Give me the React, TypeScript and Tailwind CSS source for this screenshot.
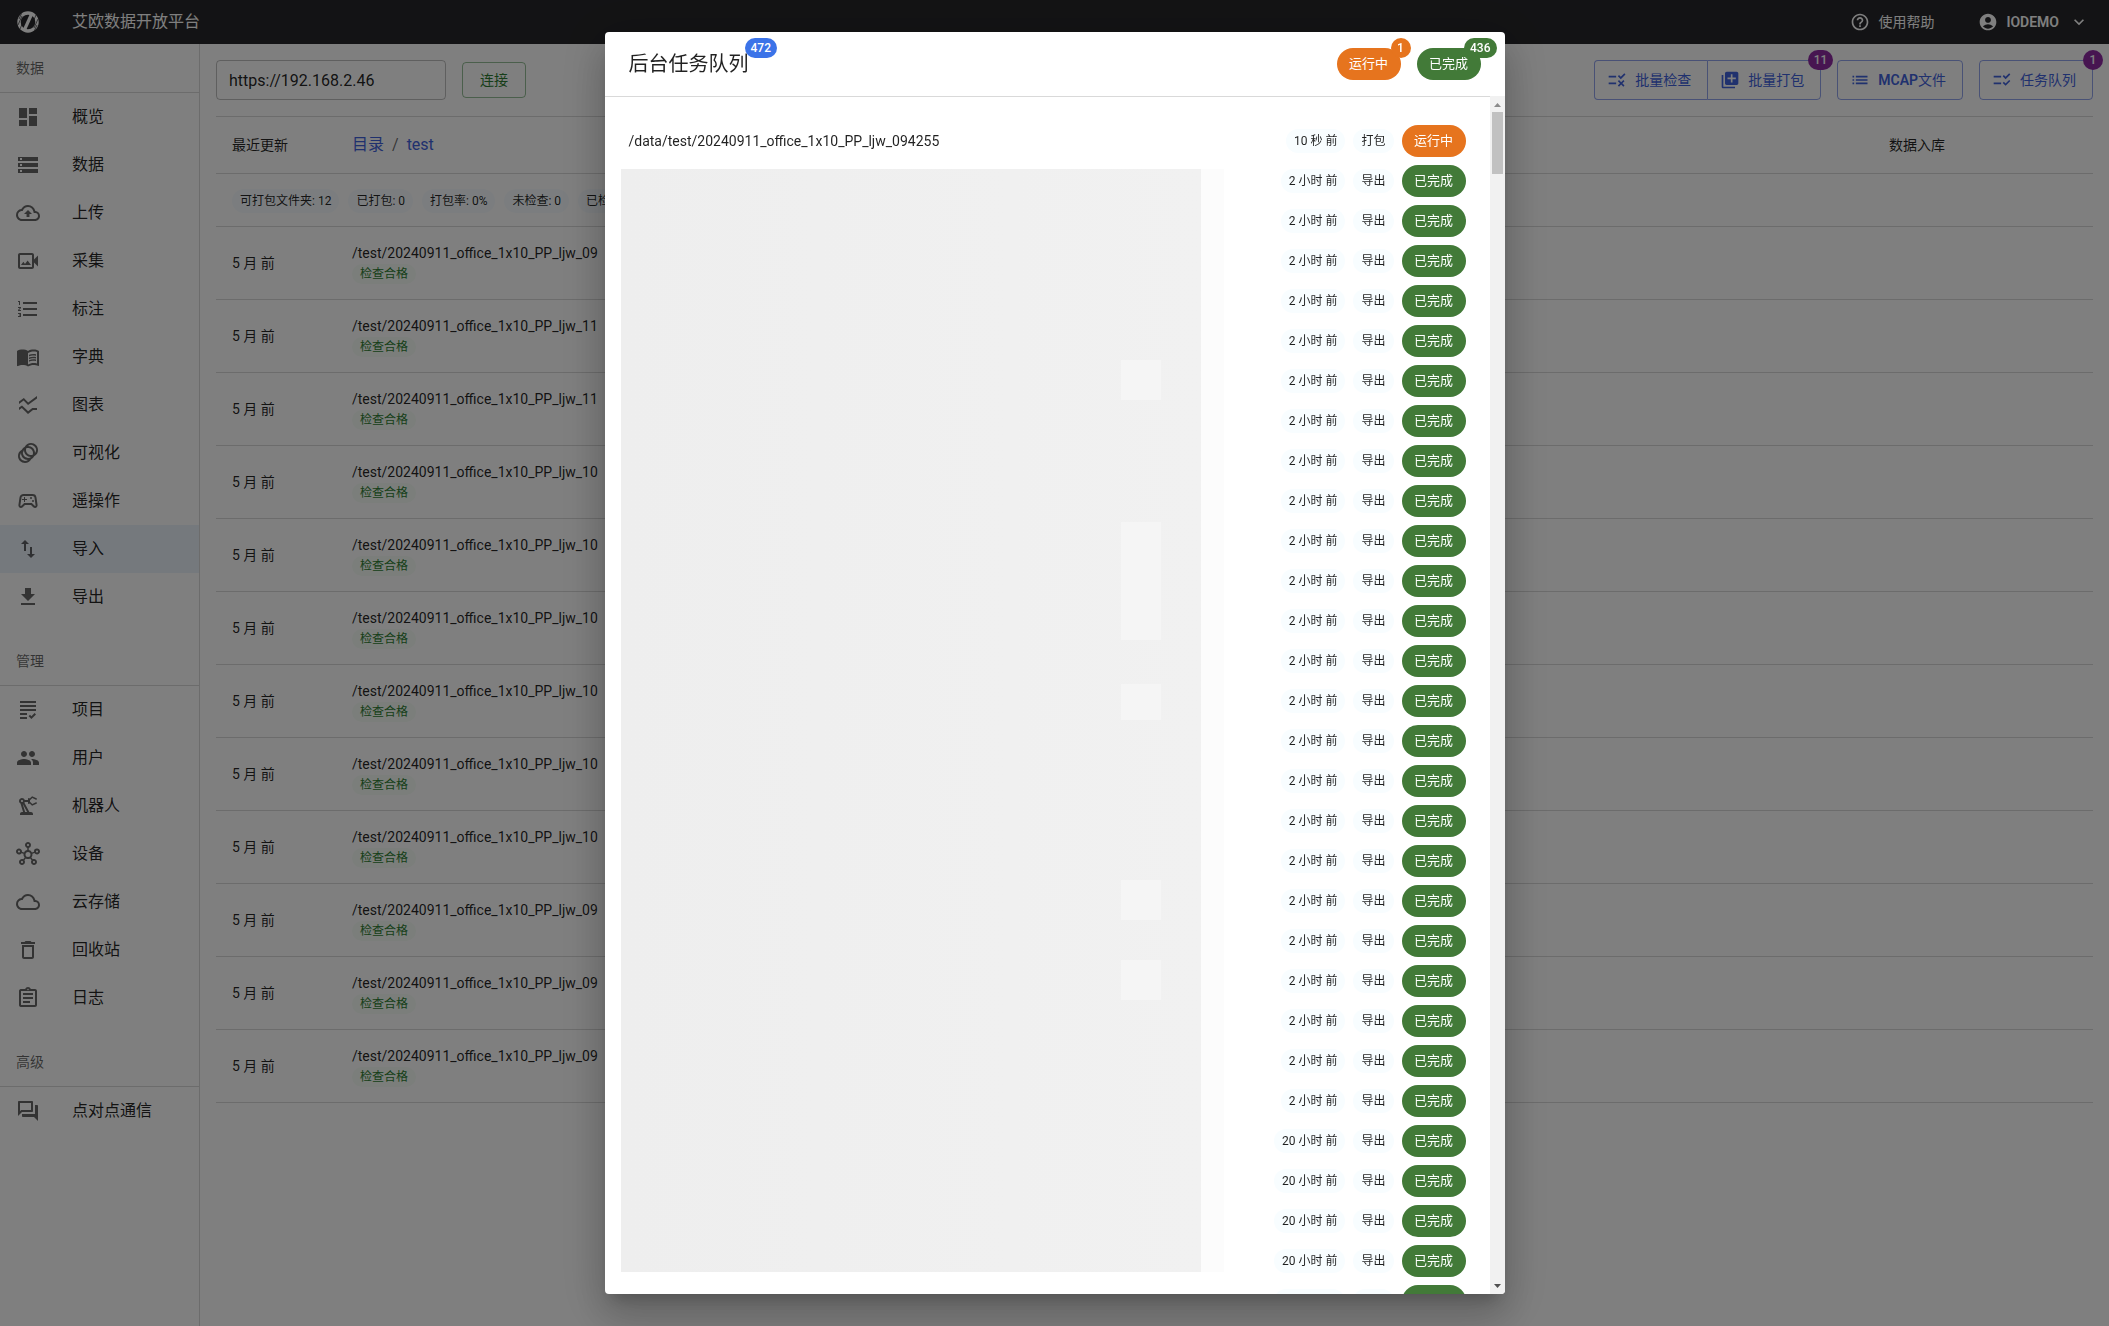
import clsx from "clsx";
import { IconType } from "react-icons";
import {
    MdAccountCircle,
    MdAnimation,
    MdChecklistRtl,
    MdDashboard,
    MdDeleteOutline,
    MdDownload,
    MdFormatListNumbered,
    MdGrading,
    MdHelpOutline,
    MdImportExport,
    MdKeyboardArrowDown,
    MdLibraryAdd,
    MdList,
    MdMenuBook,
    MdOutlineAssignment,
    MdOutlineCloud,
    MdOutlineCloudUpload,
    MdOutlineHub,
    MdOutlinePrecisionManufacturing,
    MdOutlineQuestionAnswer,
    MdOutlineSportsEsports,
    MdOutlineVideoCameraBack,
    MdPeople,
    MdRule,
    MdSsidChart,
    MdStorage,
} from "react-icons/md";

interface NavItem {
    label: string,
    icon: IconType,
    active?: boolean,
}

interface Task {
    time: string,
    type: string,
    running?: boolean,
    path?: string,
}

const sections: { title: string, items: NavItem[] }[] = [
    {
        title: "数据",
        items: [
            { label: "概览", icon: MdDashboard },
            { label: "数据", icon: MdStorage },
            { label: "上传", icon: MdOutlineCloudUpload },
            { label: "采集", icon: MdOutlineVideoCameraBack },
            { label: "标注", icon: MdFormatListNumbered },
            { label: "字典", icon: MdMenuBook },
            { label: "图表", icon: MdSsidChart },
            { label: "可视化", icon: MdAnimation },
            { label: "遥操作", icon: MdOutlineSportsEsports },
            { label: "导入", icon: MdImportExport, active: true },
            { label: "导出", icon: MdDownload },
        ],
    },
    {
        title: "管理",
        items: [
            { label: "项目", icon: MdGrading },
            { label: "用户", icon: MdPeople },
            { label: "机器人", icon: MdOutlinePrecisionManufacturing },
            { label: "设备", icon: MdOutlineHub },
            { label: "云存储", icon: MdOutlineCloud },
            { label: "回收站", icon: MdDeleteOutline },
            { label: "日志", icon: MdOutlineAssignment },
        ],
    },
    {
        title: "高级",
        items: [{ label: "点对点通信", icon: MdOutlineQuestionAnswer }],
    },
];

const stats = ["可打包文件夹: 12", "已打包: 0", "打包率: 0%", "未检查: 0", "已检查: 12"];

const folders = ["09", "11", "11", "10", "10", "10", "10", "10", "10", "09", "09", "09"];

const tasks: Task[] = [
    { time: "10 秒 前", type: "打包", running: true, path: "/data/test/20240911_office_1x10_PP_ljw_094255" },
    ...Array.from({ length: 24 }, () => ({ time: "2 小时 前", type: "导出" })),
    ...Array.from({ length: 5 }, () => ({ time: "20 小时 前", type: "导出" })),
];

const Logo = () => (
    <svg viewBox="0 0 24 24" className="size-6 shrink-0" fill="none" stroke="#fff">
        <circle cx="12" cy="12" r="9" strokeWidth="3.4" />
        <path d="M8.600 19.500 15.400 4.500" strokeWidth="3.200" />
        <path d="M3 9 5.500 3.500M2 15 6 6M4 19 7 12M17 12 20 5M18 18 22 9M18.500 20.500 21 15" stroke="#27272a" strokeWidth="0.700" />
    </svg>
);

const Header = () => (
    <header className="flex h-11 items-center bg-[#27272a] pr-5 pl-4 text-white">
        <Logo />
        <h1 className="ml-8 flex-1 text-base">艾欧数据开放平台</h1>
        <a href="#help" className="flex items-center gap-2 text-sm">
            <MdHelpOutline className="size-5" />
            使用帮助
        </a>
        <button type="button" className="ml-11 flex items-center gap-2 text-sm font-semibold">
            <MdAccountCircle className="size-5" />
            IODEMO
            <MdKeyboardArrowDown className="ml-0.5 size-5" />
        </button>
    </header>
);

const Sidebar = () => (
    <nav className="w-50 shrink-0 border-r border-black/15">
        {sections.map(section => (
            <section key={section.title} className="mb-4">
                <h2 className="h-12 px-4 text-sm leading-12 text-black/60">{section.title}</h2>
                <ul className="border-t border-black/15">
                    {section.items.map(({ label, icon: Icon, active }) => (
                        <li key={label}>
                            <a href="#" className={clsx("flex h-12 items-center gap-8 px-4", active && "bg-[#ebf3fb]")}>
                                <Icon className="size-6 text-black/60" />
                                {label}
                            </a>
                        </li>
                    ))}
                </ul>
            </section>
        ))}
    </nav>
);

const outlined = "flex h-10 items-center gap-2 border border-[#4a67e0]/60 pr-4 pl-3 text-sm text-[#4162dc]";

const Toolbar = () => (
    <div className="flex items-center gap-4 border-b border-black/15 py-4">
        <input
            type="text"
            aria-label="服务器地址"
            defaultValue="https://192.168.2.46"
            className="h-10 w-[230px] rounded border border-black/25 px-3 text-base"
            />
        <button type="button" className="h-9 w-16 rounded border border-[#2e7d32]/50 text-sm text-[#2e7d32]">
            连接
        </button>
        <div className="relative ml-auto flex">
            <button type="button" className={clsx(outlined, "rounded-l border-r-0")}>
                <MdRule className="size-5" />
                批量检查
            </button>
            <button type="button" className={clsx(outlined, "rounded-r")}>
                <MdLibraryAdd className="size-5" />
                批量打包
            </button>
            <CornerBadge text="11" className="-right-3 bg-[#8e2ba3]" />
        </div>
        <button type="button" className={clsx(outlined, "rounded")}>
            <MdList className="size-5" />
            <span><b className="font-semibold">MCAP</b>文件</span>
        </button>
        <div className="relative">
            <button type="button" className={clsx(outlined, "rounded")}>
                <MdChecklistRtl className="size-5" />
                任务队列
            </button>
            <CornerBadge text="1" className="-right-2.5 bg-[#8e2ba3]" />
        </div>
    </div>
);

const CornerBadge = ({ text, className }: { text: string, className: string }) => (
    <span className={clsx("absolute -top-2.5 flex h-5 min-w-5 items-center justify-center rounded-full px-1.5 text-xs font-medium text-white", className)}>
        {text}
    </span>
);

const FolderTable = () => (
    <table className="w-full table-fixed text-left text-sm">
        <colgroup>
            <col className="w-30" />
            <col />
            <col className="w-55" />
        </colgroup>
        <thead>
            <tr className="h-14 border-b border-black/15">
                <th className="px-4 font-normal">最近更新</th>
                <th className="px-4 font-normal">
                    <div className="flex gap-2 text-base text-black/60">
                        <a href="#root" className="text-[#4162dc]">目录</a>
                        /
                        <a href="#test" className="text-[#4162dc]">test</a>
                    </div>
                </th>
                <th className="px-4 font-normal">数据入库</th>
            </tr>
        </thead>
        <tbody>
            <tr className="h-[53px] border-b border-black/15">
                <td colSpan={3} className="px-4 pt-0.5">
                    <div className="flex gap-[9px]">
                        {stats.map(stat => (
                            <span key={stat} className="rounded-full bg-[#f6fbff] px-2 text-xs leading-6">{stat}</span>
                        ))}
                    </div>
                </td>
            </tr>
            {folders.map((suffix, i) => (
                <tr key={i} className="h-[73px] border-b border-black/15">
                    <td className="px-4">5 月 前</td>
                    <td className="px-4 pt-0.5">
                        <p className="leading-5">/test/20240911_office_1x10_PP_ljw_{suffix}</p>
                        <span className="inline-block rounded-full bg-[#f6fdf6] px-2 text-xs leading-5 text-[#2e7d32]">检查合格</span>
                    </td>
                    <td />
                </tr>
            ))}
        </tbody>
    </table>
);

const StatusChip = ({ running }: { running?: boolean }) => (
    <span className={clsx("flex h-8 w-16 items-center justify-center rounded-full text-[13px] text-white", running ? "bg-[#e6741e]" : "bg-[#427a38]")}>
        {running ? "运行中" : "已完成"}
    </span>
);

const Patch = ({ className }: { className: string }) => (
    <div className={clsx("absolute right-10 w-10 bg-[#f5f5f5]", className)} />
);

const Scrollbar = () => (
    <div aria-hidden="true" className="flex w-[15px] shrink-0 flex-col items-center bg-[#f1f1f1]">
        <svg viewBox="0 0 15 16" className="h-4 w-full" fill="#8b8b8b"><path d="M4 11 7.500 7 11 11z" /></svg>
        <div className="h-[62px] w-[11px] bg-[#c1c1c1]" />
        <svg viewBox="0 0 15 16" className="mt-auto h-4 w-full" fill="#505050"><path d="M4 6 7.500 10 11 6z" /></svg>
    </div>
);

const TaskDialog = () => (
    <div className="fixed inset-0 flex justify-center bg-black/50 py-8">
        <div
            role="dialog"
            aria-label="后台任务队列"
            className="flex w-full max-w-[900px] flex-col overflow-hidden rounded bg-white shadow-[0_11px_15px_-7px_rgba(0,0,0,0.2),0_24px_38px_3px_rgba(0,0,0,0.14),0_9px_46px_8px_rgba(0,0,0,0.12)]"
            >
            <div className="flex h-16 shrink-0 items-center gap-4 px-6">
                <div className="relative mr-auto">
                    <h2 className="text-xl leading-8">后台任务队列</h2>
                    <CornerBadge text="472" className="left-full -ml-1 bg-[#3b73e8]" />
                </div>
                <div className="relative">
                    <StatusChip running />
                    <CornerBadge text="1" className="-right-2.5 bg-[#e6741e]" />
                </div>
                <div className="relative">
                    <StatusChip />
                    <CornerBadge text="436" className="-right-4 bg-[#427a38]" />
                </div>
            </div>
            <div className="flex min-h-0 flex-1">
                <div className="relative flex-1 overflow-hidden border-t border-black/15 px-6 pt-7">
                    <ul className="flex flex-col gap-2">
                        {tasks.map((task, i) => (
                            <li key={i} className="flex items-center gap-2">
                                <span className="mr-auto text-sm">{task.path}</span>
                                <span className="rounded-full bg-[#f8fdff] px-2 text-xs leading-6">{task.time}</span>
                                <span className="rounded-full bg-[#f8fdff] px-2 text-xs leading-6">{task.type}</span>
                                <StatusChip running={task.running} />
                            </li>
                        ))}
                    </ul>
                    {/* paths of the finished tasks stay masked */}
                    <div className="absolute top-18 bottom-[22px] left-4 flex w-[603px] bg-[#fcfcfc]">
                        <div className="relative w-[580px] bg-linear-to-r from-[#eeeeee] to-[#f1f1f1]">
                            <Patch className="top-[191px] h-10" />
                            <Patch className="top-[353px] h-[118px]" />
                            <Patch className="top-[515px] h-9" />
                            <Patch className="top-[711px] h-10" />
                            <Patch className="top-[791px] h-10" />
                        </div>
                    </div>
                </div>
                <Scrollbar />
            </div>
        </div>
    </div>
);

const App = () => {
    return (
        <div className="flex min-h-screen flex-col bg-white font-[Roboto,'Noto_Sans_CJK_SC',sans-serif] text-black/87">
            <Header />
            <div className="flex flex-1">
                <Sidebar />
                <main className="min-w-0 flex-1 px-4">
                    <Toolbar />
                    <FolderTable />
                </main>
            </div>
            <TaskDialog />
        </div>
    );
};

export default App;
